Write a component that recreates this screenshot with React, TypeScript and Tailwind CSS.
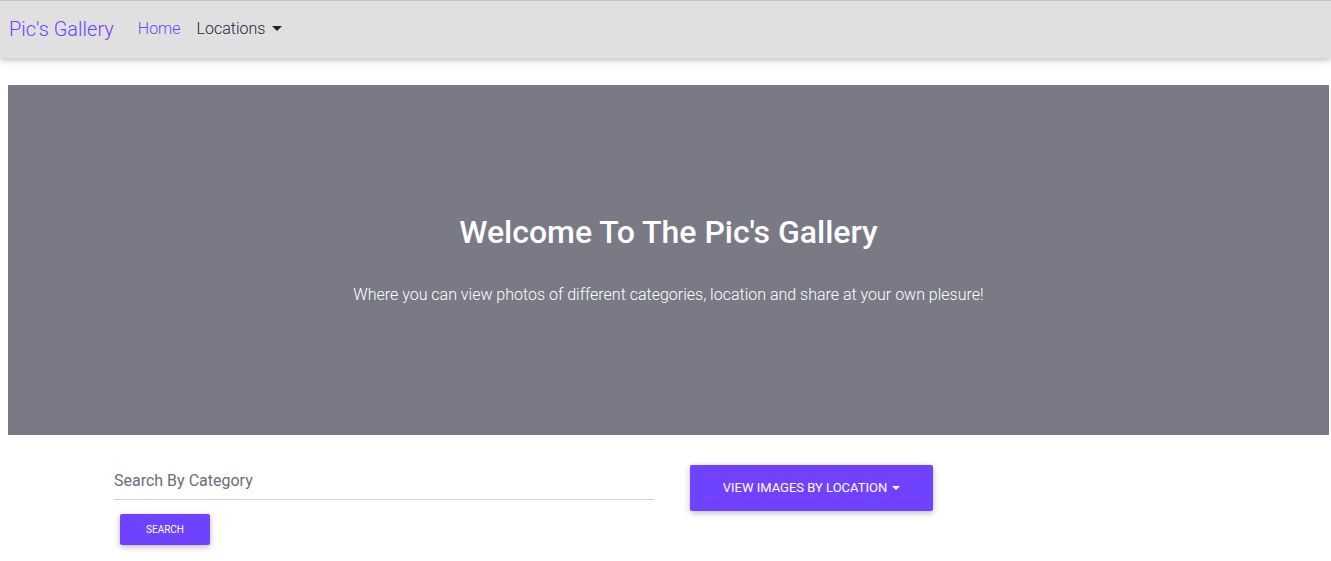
import React from "react";

export default function App() {
  return (
    <div className="min-h-[561px] bg-white font-['Roboto',sans-serif]">
      {/* Navbar */}
      <nav className="flex h-[58px] items-center border-t border-[#c4c4c4] bg-[#e0e0e0] pb-[2px] pl-[9px] shadow-[0_2px_5px_rgba(0,0,0,0.16),0_2px_10px_rgba(0,0,0,0.12)]">
        <a className="mr-6 text-[20px] font-light text-[#6f42ff]">Pic's Gallery</a>
        <a className="mr-4 text-[16px] font-light text-[#6f42ff]">Home</a>
        <a className="flex items-center text-[16px] font-light text-[#2a1a3a]">
          Locations
          <span className="ml-[7px] inline-block border-x-[5px] border-t-[5px] border-x-transparent border-t-[#212529]" />
        </a>
      </nav>

      {/* Jumbotron */}
      <section className="ml-2 mr-[2px] mt-[27px] flex h-[350px] flex-col items-center justify-center bg-[#797a86] text-white">
        <h1 className="mt-[-6px] text-[32px] font-medium">Welcome To The Pic's Gallery</h1>
        <p className="mt-[27px] text-[16px] font-light">
          Where you can view photos of different categories, location and share at your own plesure!
        </p>
      </section>

      {/* Search row */}
      <div className="mt-[30px] flex items-start pl-[114px]">
        <div className="w-[540px]">
          <div className="border-b border-[#ced4da] pb-[6px] pt-[4px] text-[16px] text-[#6c6c78]">
            Search By Category
          </div>
          <button className="ml-[6px] mt-[14px] h-[31px] w-[90px] rounded-[2px] bg-[#6f42ff] text-[10px] uppercase text-white shadow-[0_2px_5px_rgba(0,0,0,0.16),0_2px_10px_rgba(0,0,0,0.12)]">
            Search
          </button>
        </div>
        <button className="ml-[36px] flex h-[46px] w-[243px] items-center justify-center rounded-[2px] bg-[#6f42ff] text-[13px] uppercase text-white shadow-[0_2px_5px_rgba(0,0,0,0.16),0_2px_10px_rgba(0,0,0,0.12)]">
          View images by location
          <span className="ml-[5px] inline-block border-x-[4px] border-t-[4px] border-x-transparent border-t-white" />
        </button>
      </div>
    </div>
  );
}
